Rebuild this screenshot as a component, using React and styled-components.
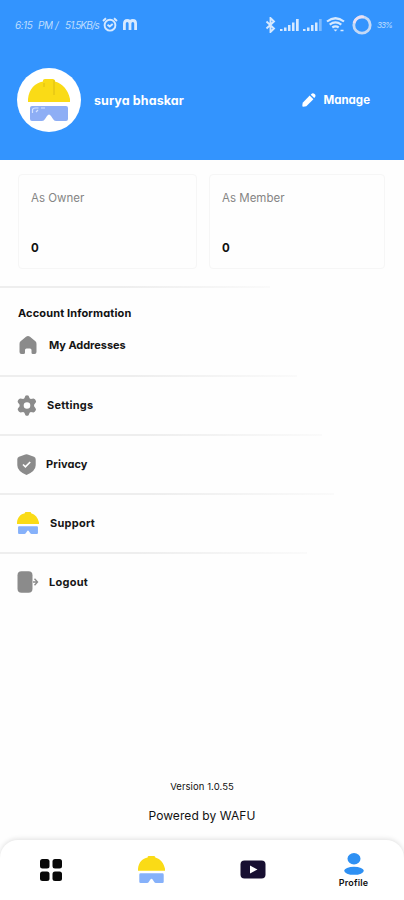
import styled, { createGlobalStyle } from "styled-components";

const GlobalStyle = createGlobalStyle`
  * {
    box-sizing: border-box;
  }

  body {
    margin: 0;
    background: #fefefe;
    color: #111;
    font-family: Inter, "Open Sans", sans-serif;
    font-feature-settings: "cv11";
  }

  svg {
    display: block;
    flex-shrink: 0;
  }
`;

const Page = styled.div`
  width: 404px;
  height: 900px;
  display: flex;
  flex-direction: column;
  overflow: hidden;
`;

const Header = styled.header`
  height: 160px;
  flex-shrink: 0;
  background: #3394fe;
  color: #fff;
`;

const StatusBar = styled.div`
  height: 50px;
  padding: 0 13px 1px 15px;
  display: flex;
  align-items: center;
  color: #d6e9ff;
`;

const StatusText = styled.span`
  width: ${({ $width }) => $width}px;
  font-size: ${({ $size }) => $size || 10}px;
  font-style: italic;
  letter-spacing: ${({ $spacing }) => $spacing || -0.5}px;
  white-space: nowrap;
  opacity: 0.85;
`;

const AppIcons = styled.div`
  display: flex;
  align-items: center;
  gap: 5px;
`;

const StatusIcons = styled.div`
  display: flex;
  align-items: center;
  gap: 4px;
  margin-left: auto;
`;

const RingSlot = styled.div`
  padding: 0 1px 0 3px;
`;

const ProfileRow = styled.div`
  height: 99px;
  padding: 0 34px 0 17px;
  display: flex;
  align-items: center;
`;

const Avatar = styled.div`
  width: 64px;
  height: 64px;
  margin-right: 13px;
  border-radius: 50%;
  background: #fff;
  display: flex;
  align-items: center;
  justify-content: center;
`;

const Text = styled.span`
  font-size: ${({ $size }) => $size || 11}px;
  font-weight: ${({ $weight }) => $weight || 700};
  letter-spacing: ${({ $spacing }) => $spacing || 0}px;
  line-height: 16px;
  white-space: nowrap;
`;

const UserName = styled(Text)`
  padding-top: 2px;
`;

const ManageButton = styled.button`
  margin-left: auto;
  padding: 0;
  border: none;
  background: none;
  color: inherit;
  font: inherit;
  font-feature-settings: inherit;
  display: flex;
  align-items: center;
  gap: 8px;
`;

const Cards = styled.section`
  padding: 14px 19px 17px 18px;
  display: grid;
  grid-template-columns: 179px 176px;
  gap: 12px;
`;

const Card = styled.div`
  height: 95px;
  padding: 15px 12px 12px;
  border: 1px solid #f6f6f6;
  border-radius: 4px;
  display: flex;
  flex-direction: column;
  justify-content: space-between;
`;

const CardLabel = styled(Text)`
  color: #858585;
`;

const Divider = styled.div`
  width: ${({ $width }) => $width}px;
  height: 2px;
  flex-shrink: 0;
  background: linear-gradient(to right, #eeeeee 45%, #fafafa);
`;

const SectionTitle = styled.h2`
  margin: 0;
  padding: 17px 0 0 18px;
  height: 33px;
  display: flex;
`;

const MenuRow = styled.div`
  height: ${({ $height }) => $height}px;
  padding: 0 0 ${({ $bottom }) => $bottom || 0}px ${({ $left }) => $left || 17}px;
  display: flex;
  align-items: center;
  gap: ${({ $gap }) => $gap}px;
  color: #8b8b8b;
`;

const MenuLabel = styled(Text)`
  color: #161616;
`;

const Footer = styled.div`
  margin-top: auto;
  padding-bottom: 16px;
  display: flex;
  flex-direction: column;
  align-items: center;
  gap: 13px;
`;

const NavBar = styled.nav`
  height: 60px;
  flex-shrink: 0;
  display: grid;
  grid-template-columns: repeat(4, 101px);
  border-radius: 18px 18px 0 0;
  background: #fff;
  box-shadow: 0 -1px 5px rgba(0, 0, 0, 0.12);
`;

const NavItem = styled.div`
  display: flex;
  flex-direction: column;
  align-items: center;
  padding-top: ${({ $top }) => $top}px;
`;

function Helmet({ width, height, detailed, visor = "#86b1fa" }) {
    return (
        <svg width={width} height={height} viewBox="0 0 42 42">
            <path d="M0 23v-3C1 10 7 4 15 2.500V1.500Q15 0 17 0h8q2 0 2 2.500C35 5 40 11 42 20v3z" fill="#fadb16" />
            {detailed && <path d="M16 4v4M26 1v15" stroke="#dcbc14" strokeWidth="1" fill="none" />}
            <path
                d="M4 27h34q2 0 2 2v11q0 2-2 2H28q-2 0-3-2l-2-3q-2-3-4 0l-2 3q-1 2-3 2H4q-2 0-2-2V29q0-2 2-2z"
                fill={visor}
            />
            {detailed && <path d="M4.500 34v-3q0-2 3-2h3M13 29h4M8 33l2-2" stroke="#d4e2ff" strokeWidth="1.200" fill="none" />}
        </svg>
    );
}

function AlarmIcon() {
    return (
        <svg width="16" height="15" viewBox="0 0 16 15" fill="none" stroke="currentColor" strokeWidth="1.900">
            <circle cx="8" cy="8.200" r="5.400" />
            <path d="M1 4l3-2.800M15 4l-3-2.800M5.500 7.800l2.200 1.700 3-2.500" />
        </svg>
    );
}

function MIcon() {
    return (
        <svg width="14" height="11" viewBox="0 0 14 11" fill="none" stroke="currentColor" strokeWidth="2.800">
            <path d="M1.400 11V4.500Q1.400 1.500 4.200 1.500T7 4.500V11M7 4.500Q7 1.500 9.800 1.500t2.800 3V11" />
        </svg>
    );
}

function BluetoothIcon() {
    return (
        <svg width="11" height="16" viewBox="0 0 11 16" fill="none" stroke="currentColor" strokeWidth="1.900">
            <path d="M1.500 4.500l7.500 7L5.500 15V1L9 4.500l-7.500 7" />
        </svg>
    );
}

function SignalIcon({ weak }) {
    return (
        <svg width="19" height="13" viewBox="0 0 19 13" fill="currentColor">
            <path d="M0 11h2.500v2H0zM4 9.500h2.500V13H4zM8 7h2.500v6H8zM12 4.500h2.500V13H12z" />
            <path d="M16 1h2.700v12H16z" opacity={weak ? 0.45 : 1} />
        </svg>
    );
}

function WifiIcon() {
    return (
        <svg width="19" height="15" viewBox="0 0 19 15" fill="none" stroke="currentColor" strokeWidth="2.200">
            <path d="M1 4.500Q9.500-2 18 4.500M3.700 7.600q5.800-4.300 11.600 0M6.300 10.500q3.200-2.300 6.400 0" />
            <path d="M7.500 12.500h4l-2 2z" fill="currentColor" stroke="none" />
            <path d="M14.500 13.500h3" strokeWidth="1.500" />
        </svg>
    );
}

function LoadingRing() {
    return (
        <svg width="20" height="20" viewBox="0 0 20 20" fill="none" strokeWidth="2.800">
            <circle cx="10" cy="10" r="8.200" stroke="#c4d9f6" />
            <path d="M2 8a8.200 8.200 0 0 1 10-6" stroke="#eadff3" />
        </svg>
    );
}

function PencilIcon() {
    return (
        <svg width="14" height="14" viewBox="0 0 14 14" fill="currentColor">
            <path d="M.7 9.700L7.700 2.600l3.700 3.700-7.100 7-2.900.4q-1.200 0-1.100-1.200z" />
            <path d="M8.700 1.700l.7-.7q1.500-1.400 3.200.1t.3 3.200l-.7.700z" />
        </svg>
    );
}

function HomeIcon() {
    return (
        <svg width="18" height="18" viewBox="0 0 18 18" fill="currentColor">
            <path d="M7 .8q2-1.500 4 0l5.400 4.400Q17.500 6 17.500 8v8q0 2-2 2h-1.700q-1.300 0-1.300-1.500V14q0-1.500-1.500-1.500H7.500Q6 12.500 6 14v2.500Q6 18 4.500 18h-2q-2 0-2-2V8q0-2 1.100-2.800z" />
        </svg>
    );
}

function GearIcon() {
    return (
        <svg width="20" height="21" viewBox="0 0 20 21">
            <path
                fill="currentColor"
                fillRule="evenodd"
                d="M8.400.8Q10-.5 11.600.8l1 2.400 1.200.7 2.700-.4q1.700.2 2.600 2.700 0 1-.6 1.600l-1.400 1.900v1.600l1.400 1.900q.9 1.200.1 2.300-.7 1.600-2.100 1.900l-2.700-.3-1.200.7-1 2.400q-1.600 1.300-3.200 0l-1-2.400-1.200-.7-2.700.3Q1.800 17 1 15.200q-.6-1.100.1-2l1.500-1.900V9.700L1.100 7.800Q.3 6.700 1 5.500q.8-1.800 2.500-2l2.700.4 1.200-.7zM10 7.200a3.300 3.300 0 1 0 0 6.600a3.300 3.300 0 0 0 0-6.600z"
            />
        </svg>
    );
}

function ShieldIcon() {
    return (
        <svg width="19" height="21" viewBox="0 0 19 21">
            <path d="M8.300.5q1.200-.6 2.400 0L17 2.700q1.700.6 1.700 2.500v6Q18.700 17 9.500 21 .3 17 .3 11.200v-6q0-1.900 1.700-2.500z" fill="currentColor" />
            <path d="M6 10.500l2.400 2.300L13.200 8" fill="none" stroke="#fff" strokeWidth="1.700" />
        </svg>
    );
}

function LogoutIcon() {
    return (
        <svg width="22" height="22" viewBox="0 0 22 22">
            <rect x=".5" y=".3" width="15" height="21.400" rx="4" fill="currentColor" />
            <path d="M16 11h4M17.500 7.800l3 3.200-3 3.200" fill="none" stroke="currentColor" strokeWidth="1.400" />
        </svg>
    );
}

function GridIcon() {
    return (
        <svg width="22" height="22" viewBox="0 0 22 22" fill="#080808">
            <rect width="9.500" height="9.500" rx="2.500" />
            <rect x="12.500" width="9.500" height="9.500" rx="2.500" />
            <rect y="12.500" width="9.500" height="9.500" rx="2.500" />
            <rect x="12.500" y="12.500" width="9.500" height="9.500" rx="2.500" />
        </svg>
    );
}

function VideoIcon() {
    return (
        <svg width="26" height="19" viewBox="0 0 26 19">
            <rect x=".5" y=".5" width="25" height="18" rx="4" fill="#170f31" />
            <path d="M10 5.500l7.500 4-7.500 4z" fill="#fff" />
        </svg>
    );
}

function PersonIcon() {
    return (
        <svg width="20" height="22" viewBox="0 0 20 22" fill="#2e90f3">
            <ellipse cx="10" cy="5.700" rx="6.500" ry="5.700" />
            <ellipse cx="10" cy="17.800" rx="9.800" ry="4" />
        </svg>
    );
}

const menuItems = [
    { label: "Settings", icon: <GearIcon />, gap: 10, spacing: 0.25, divider: 322 },
    { label: "Privacy", icon: <ShieldIcon />, gap: 10, spacing: 0.1, divider: 334 },
    { label: "Support", icon: <Helmet width={22} height={22} />, gap: 11, spacing: 0.25, divider: 307 },
    { label: "Logout", icon: <LogoutIcon />, gap: 10, spacing: 0.25 },
];

export default function App() {
    return (
        <Page>
            <GlobalStyle />
            <Header>
                <StatusBar>
                    <StatusText $width={23}>6:15</StatusText>
                    <StatusText $width={17}>PM</StatusText>
                    <StatusText $width={10}>/</StatusText>
                    <StatusText $width={37} $spacing={-0.9}>51.5KB/s</StatusText>
                    <AppIcons>
                        <AlarmIcon />
                        <MIcon />
                    </AppIcons>
                    <StatusIcons>
                        <BluetoothIcon />
                        <SignalIcon />
                        <SignalIcon weak />
                        <WifiIcon />
                        <RingSlot>
                            <LoadingRing />
                        </RingSlot>
                        <StatusText $width={14} $size={8} $spacing={-0.9}>33%</StatusText>
                    </StatusIcons>
                </StatusBar>
                <ProfileRow>
                    <Avatar>
                        <Helmet width={42} height={42} detailed visor="#8eaef5" />
                    </Avatar>
                    <UserName $size={12.5} $spacing={0.1}>surya bhaskar</UserName>
                    <ManageButton>
                        <PencilIcon />
                        <Text $size={11.5}>Manage</Text>
                    </ManageButton>
                </ProfileRow>
            </Header>
            <Cards>
                <Card>
                    <CardLabel $size={11.5} $weight={400}>As Owner</CardLabel>
                    <Text $size={11.5}>0</Text>
                </Card>
                <Card>
                    <CardLabel $size={11.5} $weight={400}>As Member</CardLabel>
                    <Text $size={11.5}>0</Text>
                </Card>
            </Cards>
            <Divider $width={270} />
            <SectionTitle>
                <Text $size={11} $spacing={0.13}>Account Information</Text>
            </SectionTitle>
            <MenuRow $height={54} $left={19} $bottom={6} $gap={12}>
                <HomeIcon />
                <MenuLabel $spacing={-0.05}>My Addresses</MenuLabel>
            </MenuRow>
            <Divider $width={297} />
            {menuItems.map((item) => (
                <div key={item.label}>
                    <MenuRow $height={57} $bottom={1} $gap={item.gap}>
                        {item.icon}
                        <MenuLabel $spacing={item.spacing}>{item.label}</MenuLabel>
                    </MenuRow>
                    {item.divider && <Divider $width={item.divider} />}
                </div>
            ))}
            <Footer>
                <Text $size={9.5} $weight={400} $spacing={0.07}>Version 1.0.55</Text>
                <Text $size={12} $weight={400} $spacing={0.08}>Powered by WAFU</Text>
            </Footer>
            <NavBar>
                <NavItem $top={19}><GridIcon /></NavItem>
                <NavItem $top={16}><Helmet width={27} height={27} /></NavItem>
                <NavItem $top={20}><VideoIcon /></NavItem>
                <NavItem $top={13}>
                    <PersonIcon />
                    <Text $size={9} $weight={600} $spacing={0.2}>Profile</Text>
                </NavItem>
            </NavBar>
        </Page>
    );
}
